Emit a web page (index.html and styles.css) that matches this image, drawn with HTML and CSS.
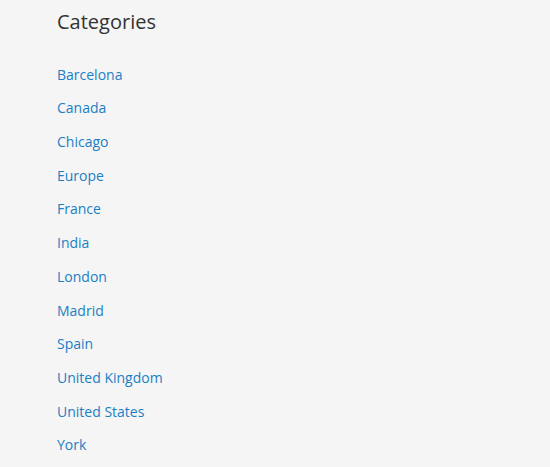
FILE: index.html
```html
<!DOCTYPE html>
<html lang="en">
<head>
<meta charset="utf-8">
<title>Categories</title>
<link rel="stylesheet" href="styles.css">
</head>
<body>
<section class="widget">
  <h2 class="widget-title">Categories</h2>
  <ul class="cat-list">
    <li><a href="#">Barcelona</a></li>
    <li><a href="#">Canada</a></li>
    <li><a href="#">Chicago</a></li>
    <li><a href="#">Europe</a></li>
    <li><a href="#">France</a></li>
    <li><a href="#">India</a></li>
    <li><a href="#">London</a></li>
    <li><a href="#">Madrid</a></li>
    <li><a href="#">Spain</a></li>
    <li><a href="#">United Kingdom</a></li>
    <li><a href="#">United States</a></li>
    <li><a href="#">York</a></li>
  </ul>
</section>
</body>
</html>
```
FILE: styles.css
```css
html, body {
  margin: 0;
  padding: 0;
  background: #f5f5f5;
}
body {
  font-family: "Open Sans", "Noto Sans", "Liberation Sans", sans-serif;
}
.widget {
  padding: 10px 0 0 57px;
}
.widget-title {
  margin: 0;
  font-size: 20px;
  line-height: 24px;
  font-weight: 400;
  color: #333333;
}
.cat-list {
  list-style: none;
  margin: 23.6px 0 0;
  padding: 0;
}
.cat-list li {
  padding: 7px 0;
  font-size: 14px;
  line-height: 19.7px;
}
.cat-list a {
  color: #1a7fc4;
  text-decoration: none;
}
```
